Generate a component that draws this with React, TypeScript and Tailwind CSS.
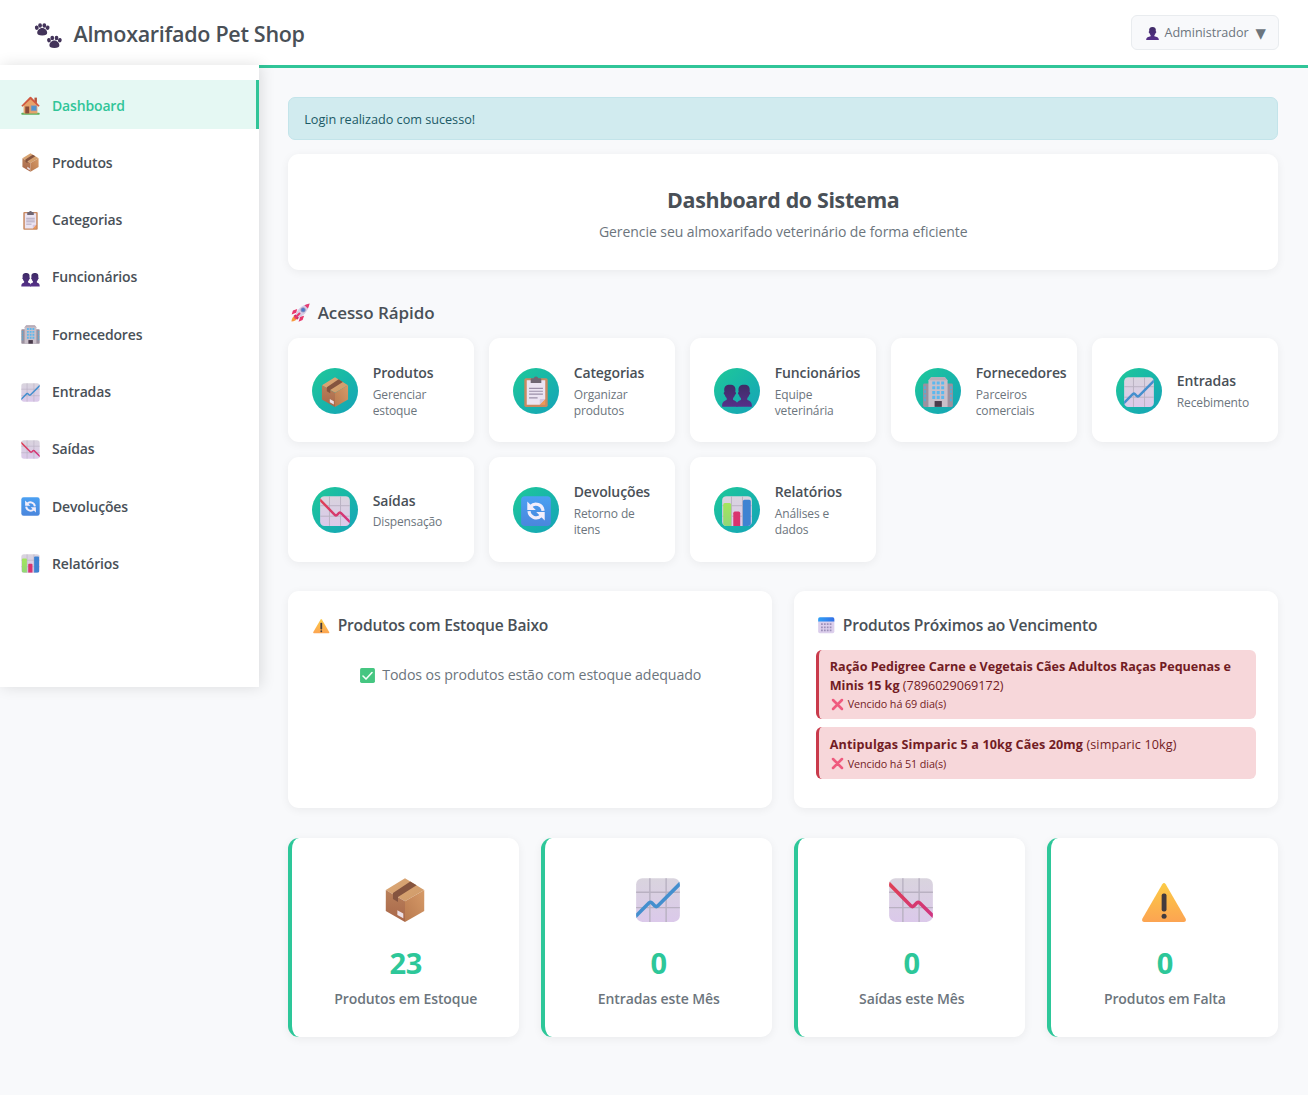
import React from "react";

type IconProps = { className?: string };
type IconType = (props: IconProps) => React.ReactElement;

/* Gradients and clips shared by all the icons */
function IconDefs() {
  return (
    <svg className="absolute size-0" aria-hidden="true">
      <defs>
        <linearGradient id="tile" x1="0" y1="0" x2="0" y2="1">
          <stop offset="0" stopColor="#d9d4de" />
          <stop offset="1" stopColor="#dbc9ea" />
        </linearGradient>
        <linearGradient id="boxTop" x1="0" y1="0" x2="1" y2="1">
          <stop offset="0" stopColor="#dca877" />
          <stop offset="1" stopColor="#cf9a68" />
        </linearGradient>
        <linearGradient id="boxLeft" x1="0" y1="0" x2="0" y2="1">
          <stop offset="0" stopColor="#b9805a" />
          <stop offset="1" stopColor="#a9674a" />
        </linearGradient>
        <linearGradient id="boxRight" x1="1" y1="0" x2="0" y2="1">
          <stop offset="0" stopColor="#d69a67" />
          <stop offset="1" stopColor="#b97a50" />
        </linearGradient>
        <linearGradient id="warn" x1="0" y1="0" x2="0" y2="1">
          <stop offset="0" stopColor="#fccb45" />
          <stop offset="1" stopColor="#fca452" />
        </linearGradient>
        <linearGradient id="bust" x1="0" y1="0" x2="0" y2="1">
          <stop offset="0" stopColor="#3f2c66" />
          <stop offset="1" stopColor="#56308a" />
        </linearGradient>
        <linearGradient id="redLine" x1="0" y1="0" x2="1" y2="1">
          <stop offset="0" stopColor="#e0414f" />
          <stop offset="1" stopColor="#cf3385" />
        </linearGradient>
        <linearGradient id="blueTile" x1="0" y1="0" x2="0" y2="1">
          <stop offset="0" stopColor="#4ba0f2" />
          <stop offset="1" stopColor="#4a86dc" />
        </linearGradient>
        <linearGradient id="greenBar" x1="0" y1="0" x2="0" y2="1">
          <stop offset="0" stopColor="#a3e55c" />
          <stop offset="1" stopColor="#92d777" />
        </linearGradient>
        <linearGradient id="calTop" x1="0" y1="0" x2="1" y2="0">
          <stop offset="0" stopColor="#2fa0f6" />
          <stop offset="1" stopColor="#3470e6" />
        </linearGradient>
        <clipPath id="tileClip">
          <rect x="2" y="2" width="28" height="28" rx="4" />
        </clipPath>
      </defs>
    </svg>
  );
}

function Icon({ className, children }: IconProps & { children: React.ReactNode }) {
  return (
    <svg viewBox="0 0 32 32" fill="none" className={`shrink-0 ${className ?? ""}`} aria-hidden="true">
      {children}
    </svg>
  );
}

function Grid() {
  return (
    <>
      <rect x="2" y="2" width="28" height="28" rx="4" fill="url(#tile)" />
      <path d="M10.8 2v28M21.2 2v28M2 11h28M2 20.9h28" stroke="#b9b1c2" strokeWidth=".9" />
    </>
  );
}

const PackageIcon: IconType = (p) => (
  <Icon {...p}>
    <path d="M16 2 28.3 9.6 16 16.8 3.7 9.6Z" fill="url(#boxTop)" />
    <path d="M3.7 9.6 16 16.8V30L3.7 23Z" fill="url(#boxLeft)" />
    <path d="M28.3 9.6 16 16.8V30l12.3-7Z" fill="url(#boxRight)" />
    <path d="m19.4 4.1 4 2.5-11.9 7.5V17.2l-3.2-1.9v-3.8Z" fill="#85543f" />
    <path d="m11.1 22.6 3.8 2.1v3l-3.8-2.1Z" fill="#ecdfe6" />
  </Icon>
);

const ClipboardIcon: IconType = (p) => (
  <Icon {...p}>
    <rect x="5" y="3" width="22" height="27" rx="1.6" fill="#c98a62" />
    <path d="M7.3 5h17.4v17.5L19.5 28H7.3Z" fill="#ebe4f2" />
    <path d="M24.7 22.5 19.5 28h5.2Z" fill="#f09a58" />
    <path d="M19.5 28v-4.2c0-.8.5-1.3 1.3-1.3h3.9Z" fill="#d5c4de" />
    <path d="M11 7.5V4.3C11 3.5 11.6 3 12.4 3h1.4a2.3 2.3 0 0 1 4.4 0h1.4c.8 0 1.4.5 1.4 1.3v3.2Z" fill="#6f6673" />
    <path d="M9.5 12.6h13M9.5 15.3h13M9.5 18h13M9.5 21.6h8" stroke="#9b8fa8" strokeWidth="1.1" />
  </Icon>
);

const PeopleIcon: IconType = (p) => (
  <Icon {...p}>
    <g transform="translate(0 2.9) scale(1 .93)" fill="url(#bust)">
      <path d="M4.2 14.2C3.2 8.500 5.800 6.800 9.300 6.800s6 1.700 5.100 7.400c1 .1 1 2.600-.3 2.700-.4 1.800-1.200 2.600-1.800 3.300v1.900c2.500 1 4.300 1.800 4.300 5.600V29H2v-1.300c0-3.800 2-4.600 4.300-5.600v-1.900c-.8-.7-1.500-1.500-1.800-3.300-1.300-.1-1.300-2.600-.3-2.700Z" />
      <path d="M17.600 14.200c-1-5.700 1.600-7.400 5.100-7.400s6 1.700 5.100 7.400c1 .1 1 2.600-.3 2.700-.4 1.800-1.200 2.600-1.800 3.300v1.900c2.500 1 4.300 1.800 4.300 5.600V29H15.400v-1.300c0-3.800 2-4.600 4.300-5.600v-1.900c-.8-.7-1.500-1.500-1.800-3.300-1.300-.1-1.300-2.600-.3-2.700Z" />
    </g>
  </Icon>
);

const PersonIcon: IconType = (p) => (
  <Icon {...p}>
    <path
      d="M9 11C8 4.500 11 2 16 2s8 2.500 7 9c1.500.2 1.400 3.800-.4 4-.5 2.300-1.400 3.600-2.600 4.600v2.200c5 1.200 9.500 2.400 9.500 7.200v1H2.500v-1c0-4.800 4.500-6 9.500-7.200v-2.200c-1.200-1-2.100-2.300-2.600-4.600-1.800-.2-1.900-3.800-.4-4Z"
      fill="url(#bust)"
    />
  </Icon>
);

const BuildingIcon: IconType = (p) => (
  <Icon {...p}>
    <rect x="2" y="8" width="28" height="22" rx="1.2" fill="#9c919f" />
    <path d="M3.800 10.500v15M28.200 10.500v15" stroke="#5fa9cf" strokeWidth="2" strokeDasharray="2.600 1.300" />
    <path d="M7 5 9.500 2h13L25 5v25H7Z" fill="#c9bfc9" />
    <path d="m7 5 2.500-3h13L25 5Z" fill="#b8adb8" />
    <path d="M12 6v17M16.200 6v17M20.400 6v17" stroke="#5cb8ee" strokeWidth="2.800" strokeDasharray="3 1.500" />
    <rect x="12.800" y="24.500" width="6.800" height="5.500" fill="#4a3c4c" />
  </Icon>
);

const ChartUpIcon: IconType = (p) => (
  <Icon {...p}>
    <Grid />
    <g clipPath="url(#tileClip)">
      <path d="m0 28.200 10.300-10.400q.9-.7 1.700 0l2 2q.9.8 1.800 0L32 3.600" stroke="#448fce" strokeWidth="2.300" />
    </g>
  </Icon>
);

const ChartDownIcon: IconType = (p) => (
  <Icon {...p}>
    <Grid />
    <g clipPath="url(#tileClip)">
      <path d="m0 3.600 16 16.200q.9.800 1.800 0l2-2q.8-.7 1.700 0L32 28.200" stroke="url(#redLine)" strokeWidth="2.300" />
    </g>
  </Icon>
);

const RefreshIcon: IconType = (p) => (
  <Icon {...p}>
    <rect x="2" y="2" width="28" height="28" rx="3.500" fill="url(#blueTile)" />
    <path d="M11 11.600a6.800 6.800 0 0 1 11.600 4.200M21 20.400a6.800 6.800 0 0 1-11.600-4.200" stroke="#f3eefb" strokeWidth="3" />
    <path d="M7.800 7v8h8ZM24.200 25v-8h-8Z" fill="#f3eefb" />
  </Icon>
);

const BarsIcon: IconType = (p) => (
  <Icon {...p}>
    <Grid />
    <g clipPath="url(#tileClip)">
      <path d="M3 30V10q0-1.500 1.500-1.500H9q1.500 0 1.500 1.500v20Z" fill="url(#greenBar)" />
      <path d="M12.500 30V18q0-1.500 1.500-1.500h3.500q1.500 0 1.500 1.500v12Z" fill="#d9336f" />
      <path d="M21.500 30V7q0-1.500 1.500-1.500h4.500Q29 5.500 29 7v23Z" fill="#3f83d2" />
    </g>
  </Icon>
);

const HouseIcon: IconType = (p) => (
  <Icon {...p}>
    <rect x="2" y="27" width="28" height="3.200" rx="1.200" fill="#5fae5c" />
    <path d="M22 4h3.800v8H22Z" fill="#b5543c" />
    <path d="M5.500 14.500 16 5l10.500 9.500V28h-21Z" fill="#e7a26b" />
    <path d="M2 16.500 15 3.200q1-.9 2 0l13 13.300-1.800 1.300L16 6.500 3.800 17.800Z" fill="#d0583f" />
    <rect x="8" y="17.500" width="6" height="10.500" fill="#8a4b37" />
    <rect x="17" y="16.500" width="8" height="7.500" fill="#4e94cf" stroke="#8d95b0" strokeWidth="1" />
  </Icon>
);

const WarningIcon: IconType = (p) => (
  <Icon {...p}>
    <path d="M14.900 5.900q1.100-1.700 2.200 0L29.700 27.600q1.100 2.200-1.300 2.400H3.600q-2.400-.2-1.300-2.400Z" fill="url(#warn)" />
    <rect x="14.500" y="11.800" width="3.100" height="11.600" rx="1.300" fill="#433b3e" />
    <circle cx="16.050" cy="26.400" r="1.600" fill="#433b3e" />
  </Icon>
);

const CalendarIcon: IconType = (p) => (
  <Icon {...p}>
    <path d="M2 8h28v19a3 3 0 0 1-3 3H5a3 3 0 0 1-3-3Z" fill="#dccfec" />
    <path d="M2 9.500V5a3 3 0 0 1 3-3h22a3 3 0 0 1 3 3v4.500Z" fill="url(#calTop)" />
    <path d="M7 14h18M7 19.500h18M7 25h18" stroke="#9c8fb8" strokeWidth="3" strokeDasharray="3 2" />
  </Icon>
);

const CheckIcon: IconType = (p) => (
  <Icon {...p}>
    <rect x="2" y="2" width="28" height="28" rx="3" fill="#45c681" />
    <path d="m7.500 17 5.700 5.700L24.500 10.500" stroke="#f5fff9" strokeWidth="3" strokeLinecap="round" strokeLinejoin="round" />
  </Icon>
);

const CrossIcon: IconType = (p) => (
  <Icon {...p}>
    <path d="M5 5 27 27M27 5 5 27" stroke="#ef5a7e" strokeWidth="6.400" strokeLinecap="round" />
  </Icon>
);

const RocketIcon: IconType = (p) => (
  <Icon {...p}>
    <path d="M11 10.500 4.500 12.800 2.500 19l7-2.500ZM21.500 21l-2.300 6.500L13 30l2.500-7.500Z" fill="#e8386d" />
    <path d="M8 20.500c-3.500 1-5.500 5-5.800 9.300 4.300-.3 8-2.300 9.300-5.800Z" fill="#f79a3e" />
    <path d="M9 18.500 5.500 21l5.500 6 3.300-3.700Z" fill="#c92d6a" />
    <path d="M8.500 19.500C10.500 12 17 4.500 29.500 2.500 27.500 15 20 21.500 12.500 23.500Z" fill="#d6cde6" />
    <path d="M22 4.800q3.500-1.800 7.900-2.700-.9 4.400-2.700 7.900Z" fill="#e63d72" />
    <circle cx="20" cy="12" r="3.400" fill="#4b7ac9" stroke="#9a93b8" strokeWidth="1.200" />
    <path d="m8 24 6.500-6.500" stroke="#e8386d" strokeWidth="3" strokeLinecap="round" />
  </Icon>
);

const PawsIcon: IconType = (p) => (
  <Icon {...p}>
    {["translate(1 2.600)", "translate(14.700 16.600)"].map((t) => (
      <g key={t} transform={t} fill="#43345a">
        <ellipse cx="2.100" cy="4.900" rx="2.100" ry="2.500" transform="rotate(-15 2.100 4.900)" />
        <ellipse cx="5.800" cy="2.400" rx="2.100" ry="2.500" />
        <ellipse cx="10.600" cy="2.400" rx="2.100" ry="2.500" />
        <ellipse cx="14.300" cy="4.900" rx="2.100" ry="2.500" transform="rotate(15 14.300 4.900)" />
        <path d="M8.200 5.300c3.200 0 5.600 2.800 5.600 5.400 0 2.300-1.700 3-5.600 3s-5.600-.7-5.600-3c0-2.600 2.400-5.400 5.600-5.400Z" />
      </g>
    ))}
  </Icon>
);

const NAV: { label: string; icon: IconType }[] = [
  { label: "Dashboard", icon: HouseIcon },
  { label: "Produtos", icon: PackageIcon },
  { label: "Categorias", icon: ClipboardIcon },
  { label: "Funcionários", icon: PeopleIcon },
  { label: "Fornecedores", icon: BuildingIcon },
  { label: "Entradas", icon: ChartUpIcon },
  { label: "Saídas", icon: ChartDownIcon },
  { label: "Devoluções", icon: RefreshIcon },
  { label: "Relatórios", icon: BarsIcon },
];

const QUICK: { title: string; text: string; icon: IconType }[] = [
  { title: "Produtos", text: "Gerenciar estoque", icon: PackageIcon },
  { title: "Categorias", text: "Organizar produtos", icon: ClipboardIcon },
  { title: "Funcionários", text: "Equipe veterinária", icon: PeopleIcon },
  { title: "Fornecedores", text: "Parceiros comerciais", icon: BuildingIcon },
  { title: "Entradas", text: "Recebimento", icon: ChartUpIcon },
  { title: "Saídas", text: "Dispensação", icon: ChartDownIcon },
  { title: "Devoluções", text: "Retorno de itens", icon: RefreshIcon },
  { title: "Relatórios", text: "Análises e dados", icon: BarsIcon },
];

const EXPIRED = [
  {
    name: "Ração Pedigree Carne e Vegetais Cães Adultos Raças Pequenas e Minis 15 kg",
    code: "(7896029069172)",
    days: 69,
    tracking: "tracking-[-0.02px]",
  },
  {
    name: "Antipulgas Simparic 5 a 10kg Cães 20mg",
    code: "(simparic 10kg)",
    days: 51,
    tracking: "tracking-[0.11px]",
  },
];

const STATS: { value: number; label: string; icon: IconType }[] = [
  { value: 23, label: "Produtos em Estoque", icon: PackageIcon },
  { value: 0, label: "Entradas este Mês", icon: ChartUpIcon },
  { value: 0, label: "Saídas este Mês", icon: ChartDownIcon },
  { value: 0, label: "Produtos em Falta", icon: WarningIcon },
];

function Header() {
  return (
    <header className="flex h-[68px] items-center justify-between border-b-3 border-[#30c598] bg-white pr-[29.5px] pl-[34px]">
      <div className="flex items-center gap-[11px] pt-[3px]">
        <PawsIcon className="mt-0.5 size-[28.5px]" />
        <h1 className="text-[21.5px] leading-[30px] font-[550] tracking-[-0.3px] text-[#495057]">Almoxarifado Pet Shop</h1>
      </div>
      <button className="flex h-[35px] items-center rounded-[6px] border border-[#e9ecef] bg-[#f8f9fb] pt-[2px] pr-[11.5px] pl-[13px] text-[#6c757d]">
        <PersonIcon className="mr-[5px] size-[15px]" />
        <span className="text-[12.6px] tracking-[-0.03px]">Administrador</span>
        <span className="ml-[7px] font-['DejaVu_Sans'] text-[13.5px] leading-none">▼</span>
      </button>
    </header>
  );
}

function Sidebar() {
  return (
    <aside className="relative z-10 -mt-[3px] h-[622px] w-[258.5px] shrink-0 bg-white pt-[14.8px] shadow-[2px_0_14px_rgba(0,0,0,0.12)]">
      <nav className="flex flex-col gap-[7.8px]">
        {NAV.map(({ label, icon: NavIcon }, i) => (
          <a
            key={label}
            className={
              i === 0
                ? "flex h-[49.5px] items-center gap-[11px] border-r-3 border-[#30c598] bg-[#e5f8f3] pt-[2px] pl-5 text-[#30c598]"
                : "flex h-[49.5px] items-center gap-[11px] border-r-3 border-transparent pt-[2px] pl-5 text-[#495057]"
            }
          >
            <NavIcon className="size-[21px]" />
            <span className="text-[14px] leading-5 font-semibold tracking-[-0.16px]">{label}</span>
          </a>
        ))}
      </nav>
    </aside>
  );
}

export default function App() {
  return (
    <div className="min-h-[1095px] bg-[#f8f9fb] font-['Open_Sans','Noto_Sans',sans-serif]">
      <IconDefs />
      <Header />
      <div className="flex items-start">
        <Sidebar />
        <main className="min-w-0 flex-1 pt-[29px] pr-[29.7px] pl-[29.7px]">
          <div className="flex h-[42.5px] items-center rounded-[7px] border border-[#c3e4ea] bg-[#d1ebef] px-[15px] pt-[2px] text-[12.7px] tracking-[-0.03px] text-[#1b5a66]">
            Login realizado com sucesso!
          </div>

          <section className="mt-[14.5px] flex h-[115.5px] flex-col items-center rounded-[11px] bg-white pt-[31px] shadow-[0_2px_10px_rgba(0,0,0,0.06)]">
            <h2 className="text-[21.4px] leading-[30px] font-bold tracking-[-0.34px] text-[#495057]">Dashboard do Sistema</h2>
            <p className="mt-[6px] text-[14px] leading-[22px] tracking-[-0.07px] text-[#6c757d]">
              Gerencie seu almoxarifado veterinário de forma eficiente
            </p>
          </section>

          <h3 className="mt-[29.5px] mb-3 flex h-[27px] items-center gap-[7px] pl-[1.5px] text-[17px] font-semibold tracking-[-0.08px] text-[#495057]">
            <RocketIcon className="size-[21px]" />
            Acesso Rápido
          </h3>

          <section className="grid auto-rows-[104.3px] grid-cols-5 gap-[15px]">
            {QUICK.map(({ title, text, icon: QuickIcon }) => (
              <article
                key={title}
                className="flex min-w-0 items-center gap-[15px] rounded-[11px] bg-white px-[23.5px] pt-[1.4px] shadow-[0_2px_10px_rgba(0,0,0,0.06)]"
              >
                <div className="flex size-[46px] shrink-0 items-center justify-center rounded-full bg-linear-135 from-[#20c997] to-[#17a2b8]">
                  <QuickIcon className="mt-0.5 size-[34px]" />
                </div>
                <div className="min-w-0 pt-px">
                  <h4 className="text-[14px] leading-5 font-semibold tracking-[-0.12px] whitespace-nowrap text-[#495057]">{title}</h4>
                  <p className="mt-[3.5px] text-[12px] leading-[16.6px] tracking-[-0.13px] text-[#6c757d]">{text}</p>
                </div>
              </article>
            ))}
          </section>

          <section className="mt-[29.5px] grid h-[217px] grid-cols-2 gap-[22px]">
            <article className="rounded-[11px] bg-white px-[22px] pt-[22px] shadow-[0_2px_10px_rgba(0,0,0,0.06)]">
              <h3 className="flex h-6 items-center gap-[7px] pt-px pl-0.5 text-[15.6px] font-semibold tracking-[-0.19px] text-[#495057]">
                <WarningIcon className="-mt-px size-[18.5px]" />
                Produtos com Estoque Baixo
              </h3>
              <p className="mt-[27px] flex h-[22px] items-center justify-center gap-[6px] text-[14.2px] tracking-[-0.11px] text-[#6c757d]">
                <CheckIcon className="size-[17px]" />
                Todos os produtos estão com estoque adequado
              </p>
            </article>

            <article className="rounded-[11px] bg-white px-[22px] pt-[22px] shadow-[0_2px_10px_rgba(0,0,0,0.06)]">
              <h3 className="flex h-6 items-center gap-[7px] pt-px pl-px text-[15.6px] font-semibold tracking-[-0.19px] text-[#495057]">
                <CalendarIcon className="-mt-px size-[18.5px]" />
                Produtos Próximos ao Vencimento
              </h3>
              <ul className="mt-[12.5px] flex flex-col gap-2">
                {EXPIRED.map(({ name, code, days, tracking }) => (
                  <li
                    key={code}
                    className="rounded-[6px] border-l-3 border-[#c93a4b] bg-[#f7d7da] pt-[8.5px] pr-[11px] pb-[6.5px] pl-[10.5px] text-[#721c24]"
                  >
                    <p className={`text-[12.6px] leading-[18.5px] ${tracking}`}>
                      <strong className="font-bold">{name}</strong> {code}
                    </p>
                    <p className="mt-[1.2px] flex h-[16.6px] items-center gap-1 pl-px text-[10.8px] tracking-[-0.1px]">
                      <CrossIcon className="size-[13px]" />
                      Vencido há {days} dia(s)
                    </p>
                  </li>
                ))}
              </ul>
            </article>
          </section>

          <section className="mt-[29.5px] grid h-[199.5px] grid-cols-4 gap-[22px]">
            {STATS.map(({ value, label, icon: StatIcon }) => (
              <article
                key={label}
                className="flex flex-col items-center rounded-[11px] border-l-4 border-[#2dc799] bg-white pt-[37px] shadow-[0_2px_10px_rgba(0,0,0,0.06)]"
              >
                <StatIcon className="-ml-px size-[50px]" />
                <strong className="mt-[18px] text-[29px] leading-10 font-bold tracking-[-0.3px] text-[#2dc799]">{value}</strong>
                <span className="mt-[5px] text-[14px] leading-[22px] font-semibold tracking-[-0.1px] text-[#6c757d]">{label}</span>
              </article>
            ))}
          </section>
        </main>
      </div>
    </div>
  );
}
